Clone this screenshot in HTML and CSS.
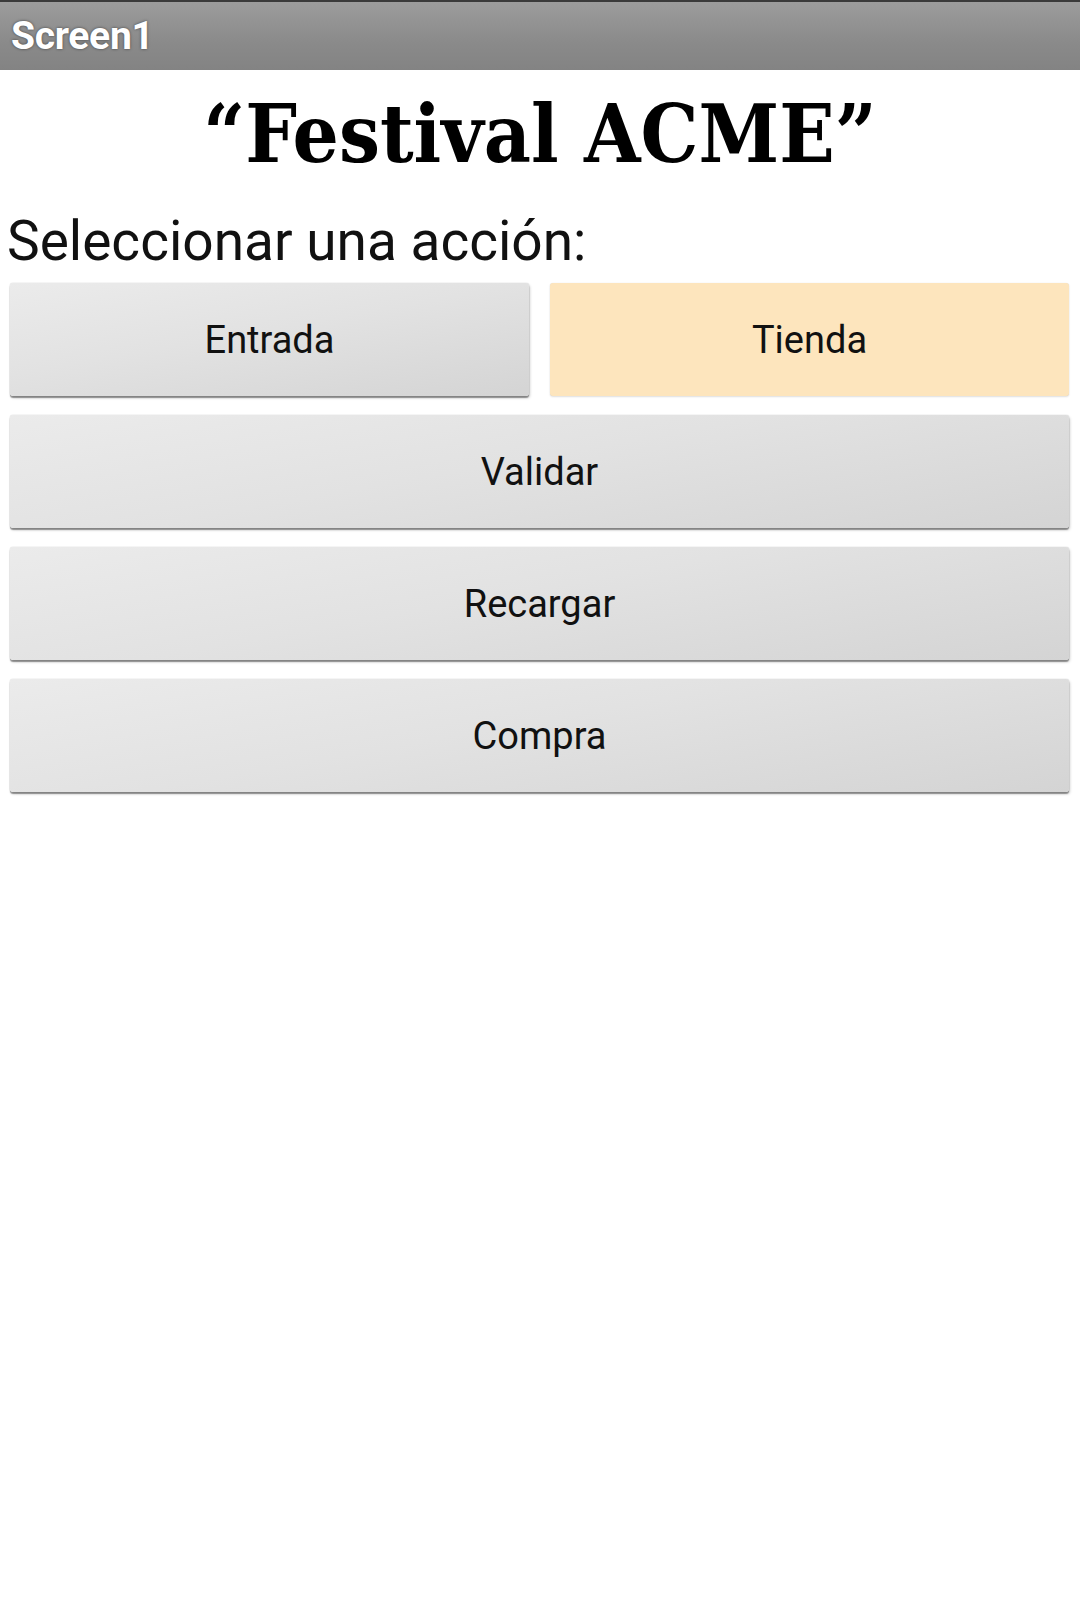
FILE: index.html
```html
<!DOCTYPE html>
<html lang="es">
<head>
<meta charset="utf-8">
<title>Screen1</title>
<link rel="stylesheet" href="styles.css">
</head>
<body>
<header class="titlebar"><span class="titlebar-text">Screen1</span></header>
<main class="screen">
  <h1 class="title">“Festival ACME”</h1>
  <p class="prompt">Seleccionar una acción:</p>
  <div class="actions">
    <div class="row">
      <button class="btn">Entrada</button>
      <button class="btn btn-peach">Tienda</button>
    </div>
    <button class="btn">Validar</button>
    <button class="btn">Recargar</button>
    <button class="btn">Compra</button>
  </div>
</main>
</body>
</html>
```
FILE: styles.css
```css
html, body {
  margin: 0;
  padding: 0;
  background: #ffffff;
}
body {
  width: 1080px;
  height: 1600px;
  overflow: hidden;
  font-family: Roboto, "Liberation Sans", sans-serif;
}
.titlebar {
  height: 68px;
  border-top: 2px solid #3a3a3a;
  background: linear-gradient(to bottom, #9c9c9c 0%, #8a8a8a 60%, #838383 100%);
  display: flex;
  align-items: center;
  padding-left: 11px;
  box-sizing: content-box;
}
.titlebar-text {
  color: #ffffff;
  font-weight: 700;
  font-size: 39px;
  text-shadow: 0 0 3px rgba(0,0,0,0.55);
  letter-spacing: -0.3px;
}
.screen {
  display: flex;
  flex-direction: column;
}
.title {
  margin: 19px 0 0 0;
  text-align: center;
  font-family: "DejaVu Serif Condensed", "DejaVu Serif", "Liberation Serif", serif;
  font-stretch: condensed;
  font-weight: 700;
  font-size: 81px;
  line-height: 90px;
  color: #000;
}
.prompt {
  margin: 27px 0 0 7px;
  font-size: 55px;
  line-height: 70px;
  color: #111;
}
.actions {
  display: flex;
  flex-direction: column;
  gap: 19px;
  padding: 7px 11px 0 10px;
}
.row {
  display: flex;
  gap: 21px;
}
.row .btn {
  flex: 1;
}
.btn {
  height: 113px;
  border: none;
  border-radius: 3px;
  font-family: Roboto, "Liberation Sans", sans-serif;
  font-size: 38px;
  color: #111;
  background: linear-gradient(170deg, #ebebeb 0%, #e2e2e2 45%, #d4d4d4 100%);
  box-shadow: 0 0 1px rgba(0,0,0,0.35), 0 2px 1px rgba(0,0,0,0.35), 1px 2px 3px rgba(0,0,0,0.2);
  padding: 0;
}
.btn-peach {
  background: #fde5bd;
  box-shadow: 0 0 1px rgba(0,0,0,0.12), 0 1px 2px rgba(0,0,0,0.12);
}
```
